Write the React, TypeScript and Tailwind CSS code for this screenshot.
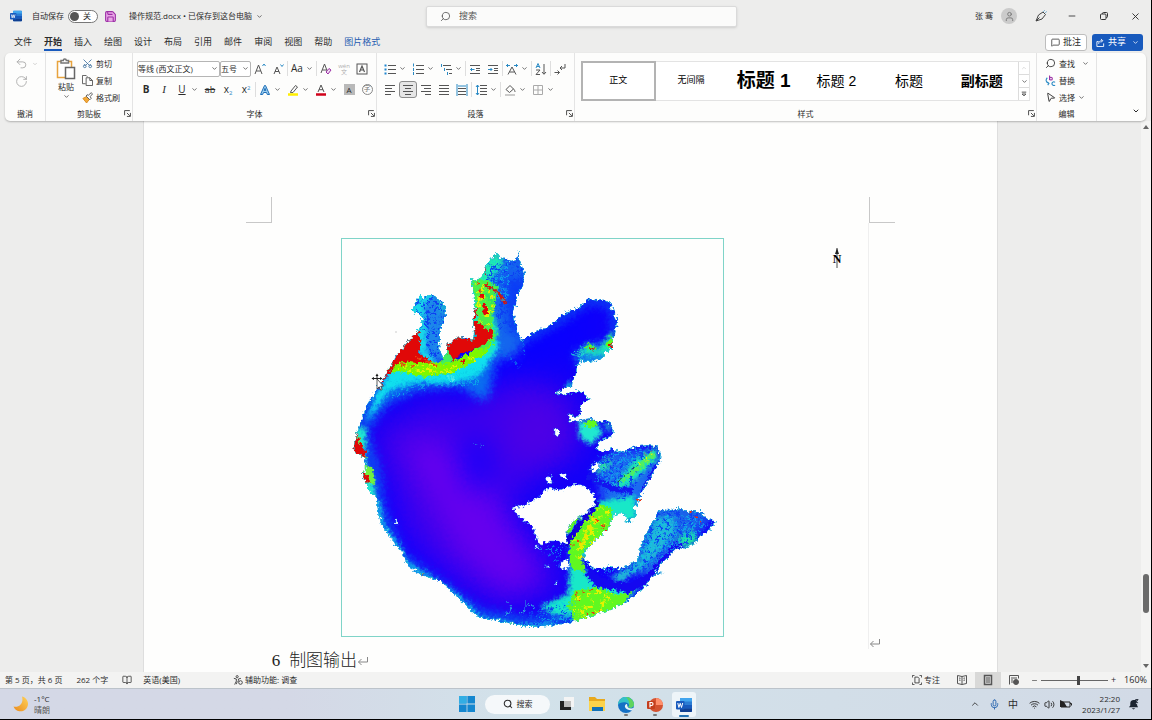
import React, { useState } from 'react';
import {
  Search,
  Scissors,
  Undo2,
  RotateCw,
  Save,
  ChevronDown,
  ChevronUp,
  Minus,
  X,
  MessageSquare,
  Share,
  User,
  BookOpen,
  Mic,
  Wifi,
  Volume2,
  MousePointer2,
} from 'lucide-react';

const tabs = ['文件', '开始', '插入', '绘图', '设计', '布局', '引用', '邮件', '审阅', '视图', '帮助', '图片格式'];

const styleItems = [
  { name: '正文', className: 'text-[9px]' },
  { name: '无间隔', className: 'text-[9px]' },
  { name: '标题 1', className: 'text-[19px] font-bold' },
  { name: '标题 2', className: 'text-[14px]' },
  { name: '标题', className: 'text-[14px]' },
  { name: '副标题', className: 'text-[14px] font-bold' },
];

const Chev = () => <ChevronDown className="size-[7px] shrink-0 text-[#444]" strokeWidth={2.5} />;

const Sep = () => <span className="h-[15px] w-px shrink-0 bg-[#dedede]" />;

type ToolProps = { label: string; menu?: boolean; active?: boolean; children: React.ReactNode };

const Tool = ({ label, menu, active, children }: ToolProps) => (
  <button
    type="button"
    aria-label={label}
    className={`flex h-[17px] shrink-0 items-center ${menu ? 'w-7' : 'w-[18px]'}`}
  >
    <span
      className={`flex h-[17px] w-[18px] shrink-0 items-center justify-center ${
        active ? 'rounded-[3px] border border-[#8c8c8c] bg-[#e6e6e6]' : ''
      }`}
    >
      {children}
    </span>
    {menu && <Chev />}
  </button>
);

const Launcher = () => (
  <button type="button" aria-label="更多选项" className="text-[#444]">
    <svg viewBox="0 0 12 12" className="size-[7px]" fill="none" stroke="currentColor" strokeWidth="1.6">
      <path d="M1 9V1h9M5 5l5 5M11 5v6H5" />
    </svg>
  </button>
);

type GroupProps = { title: string; className: string; launcher?: boolean; children: React.ReactNode };

const Group = ({ title, className, launcher, children }: GroupProps) => (
  <section aria-label={title} className={`flex flex-col justify-between border-r border-[#e4e4e4] ${className}`}>
    {children}
    <div className="mb-px grid h-[13px] shrink-0 grid-cols-[1fr_auto_1fr] items-center">
      <span />
      <span>{title}</span>
      <span className="flex justify-end pr-px">{launcher && <Launcher />}</span>
    </div>
  </section>
);

// horizontal rules given as [x1, x2, y]
const Lines = ({ rows, color = '#555' }: { rows: number[][]; color?: string }) => (
  <g stroke={color} strokeWidth="1">
    {rows.map(([a, b, y]) => (
      <path key={`${a}-${y}`} d={`M${a} ${y}H${b}`} />
    ))}
  </g>
);

const Icon = ({ children }: { children: React.ReactNode }) => (
  <svg viewBox="0 0 12 12" className="size-3" fill="none" stroke="#555" strokeWidth="1">
    {children}
  </svg>
);

const WordLogo = ({ className }: { className: string }) => (
  <svg viewBox="0 0 16 16" className={className}>
    <rect x="4" y="1" width="12" height="14" rx="1" fill="#2b7cd3" />
    <path d="M4 2a1 1 0 0 1 1-1h10a1 1 0 0 1 1 1v2.5H4z" fill="#41a5ee" />
    <path d="M4 8h12v3.5H4z" fill="#185abd" />
    <path d="M4 11.500h12V14a1 1 0 0 1-1 1H5a1 1 0 0 1-1-1z" fill="#103f91" />
    <rect x="0" y="4" width="8.500" height="8.500" rx="1" fill="#185abd" />
    <path d="M1.800 6l1.100 4.500L4.200 6.300l1.300 4.200L6.700 6" fill="none" stroke="#fff" strokeWidth="1" />
  </svg>
);

const TitleBar = () => {
  const [autoSave, setAutoSave] = useState(false);
  return (
    <header className="grid h-8 shrink-0 grid-cols-[1fr_27%_36%] items-center text-[8px]">
      <div className="flex items-center pl-[10px]">
        <WordLogo className="mr-[10px] size-3" />
        <span id="autosave" className="mr-1">自动保存</span>
        <button
          type="button"
          role="switch"
          aria-checked={autoSave}
          aria-labelledby="autosave"
          onClick={() => setAutoSave(!autoSave)}
          className="mr-[6px] flex h-[13px] w-[30px] items-center gap-1 rounded-full border border-[#777] bg-white px-px"
        >
          <span className="size-[9px] rounded-full bg-[#555]" />
          {autoSave ? '开' : '关'}
        </button>
        <button type="button" aria-label="保存" className="mr-3">
          <Save className="size-[13px] fill-[#e9a6e6] text-[#9b2fa5]" strokeWidth={2} />
        </button>
        <button type="button" className="flex items-center gap-1">
          操作规范.docx • 已保存到这台电脑 <Chev />
        </button>
      </div>
      <label className="flex h-[21px] items-center gap-2 rounded-[2px] border border-[#dadada] bg-[#fbfbfa] px-[13px] shadow-sm">
        <Search className="size-[11px] shrink-0 -scale-x-100 text-[#555]" strokeWidth={1.8} />
        <input
          type="text"
          aria-label="搜索"
          placeholder="搜索"
          className="w-full bg-transparent text-[9px] outline-none placeholder:text-[#555]"
        />
      </label>
      <div className="flex items-center justify-end pr-[10px]">
        <span>张 骞</span>
        <button type="button" aria-label="帐户" className="ml-2 flex size-4 items-center justify-center rounded-full bg-[#cbcbcb]">
          <User className="size-[11px] text-[#777]" strokeWidth={2} />
        </button>
        <button type="button" aria-label="墨迹" className="ml-[18px]">
          <svg viewBox="0 0 12 12" className="size-3" fill="none" stroke="#444" strokeWidth="1">
            <path d="M1 11L3.500 5 8 2l2.500 2.500L7 9zM1 11l3.500-3.500" />
            <path d="M8.500 1.500l1-1M10.500 2.500l1-.8" stroke="#2a8ac4" />
          </svg>
        </button>
        <button type="button" aria-label="最小化" className="ml-5"><Minus className="size-[10px]" strokeWidth={2} /></button>
        <button type="button" aria-label="还原" className="ml-[22px]">
          <svg viewBox="0 0 10 10" className="size-[10px]" fill="none" stroke="#333" strokeWidth="1">
            <rect x="1.500" y="3" width="5.500" height="5.500" rx="1" />
            <path d="M3.500 3V2.500a1 1 0 0 1 1-1H7.500a1 1 0 0 1 1 1v3a1 1 0 0 1-1 1H7" />
          </svg>
        </button>
        <button type="button" aria-label="关闭" className="ml-[21px]"><X className="size-[11px]" strokeWidth={2} /></button>
      </div>
    </header>
  );
};

const TabRow = () => (
  <nav className="flex h-[21px] shrink-0 items-center justify-between pl-[14px] pr-2">
    <div className="flex gap-3 pt-px text-[9px]">
      {tabs.map((tab) => (
        <button
          key={tab}
          type="button"
          className={
            tab === '开始'
              ? 'border-b-2 border-[#185abd] font-bold leading-[14px]'
              : tab === '图片格式'
                ? 'border-b-2 border-transparent leading-[14px] text-[#1f5cb0]'
                : 'border-b-2 border-transparent leading-[14px]'
          }
        >
          {tab}
        </button>
      ))}
    </div>
    <div className="flex gap-[5px] pb-px text-[9px]">
      <button type="button" className="flex h-[17px] items-center gap-[3px] rounded-[3px] border border-[#bdbdbd] bg-white px-[5px]">
        <MessageSquare className="size-[9px]" strokeWidth={2} /> 批注
      </button>
      <button type="button" className="flex h-[17px] items-center gap-[3px] rounded-[3px] bg-[#185abd] px-1 text-white">
        <svg viewBox="0 0 10 10" className="size-[9px]" fill="none" stroke="currentColor">
          <path d="M3 4H1v5.500h7.500V6M3 6.500C3 4 4.500 3 7 3M5.500 1L7.500 3l-2 2" />
        </svg>
        共享
        <ChevronDown className="ml-[3px] size-[7px]" strokeWidth={2.5} />
      </button>
    </div>
  </nav>
);

const FontGroup = () => (
  <Group title="字体" launcher className="w-[244px] shrink-0">
    <div className="pl-1 pt-[5px]">
      <div className="flex h-[21px] items-center">
        <div className="flex h-4 w-[83px] items-center rounded-[2px] border border-[#b5b5b5] bg-white pr-px">
          <select aria-label="字体" className="min-w-0 flex-1 appearance-none">
            <option>等线 (西文正文)</option>
          </select>
          <Chev />
        </div>
        <div className="flex h-4 w-[31px] items-center rounded-[2px] border border-[#b5b5b5] bg-white pr-px">
          <select aria-label="字号" className="min-w-0 flex-1 appearance-none">
            <option>五号</option>
          </select>
          <Chev />
        </div>
        <Tool label="增大字号"><Icon><path d="M1 11L4.500 2 8 11M2.300 8h4.400" /><path d="M8.500 3L10 1l1.500 2" stroke="#2a8ac4" /></Icon></Tool>
        <Tool label="减小字号"><Icon><path d="M2 11L5 4l3 7M3 8.500h4" /><path d="M8.500 1.500L10 3.500l1.500-2" stroke="#2a8ac4" /></Icon></Tool>
        <Sep />
        <Tool label="更改大小写" menu><span className="text-[10px]">Aa</span></Tool>
        <Sep />
        <Tool label="清除格式"><Icon><path d="M1 10L4.500 1 8 10M2.300 7h4.400" /><path d="M6 9l3-3.500 2 1.500-3 4z" fill="#f0dcf2" stroke="#9b2fa5" /></Icon></Tool>
        <Tool label="拼音指南">
          <span className="flex flex-col items-center text-[6px] leading-[6px] text-[#b0b0b0]"><span>wén</span><span>文</span></span>
        </Tool>
        <Tool label="字符边框"><Icon><rect x="1" y="1" width="10" height="10" /><path d="M3.500 9L6 3l2.500 6M4.300 7h3.400" strokeWidth="1.2" /></Icon></Tool>
      </div>
      <div className="flex h-[21px] items-center">
        <Tool label="加粗"><span className="text-[10px] font-bold">B</span></Tool>
        <Tool label="倾斜"><span className="font-['Liberation_Serif',serif] text-[11px] italic">I</span></Tool>
        <Tool label="下划线" menu><span className="text-[10px] underline">U</span></Tool>
        <Tool label="删除线"><span className="text-[9px] line-through">ab</span></Tool>
        <Tool label="下标"><span className="text-[10px]">x<sub className="text-[6px] text-[#2a8ac4]">2</sub></span></Tool>
        <Tool label="上标"><span className="text-[10px]">x<sup className="text-[6px] text-[#2a8ac4]">2</sup></span></Tool>
        <Sep />
        <Tool label="文本效果" menu><Icon><path d="M1.500 10.500L5.500 1.500h1l4 9H8.300L7.500 8.500h-3l-.8 2zM5.200 6.500h1.600L6 4.300z" fill="#9fd0f0" stroke="#1f6fb8" /></Icon></Tool>
        <Tool label="突出显示" menu><Icon><path d="M4 7l4.500-5.500L10.500 3 6 8.500 3.500 8.700z" /><path d="M1 10.500h10" stroke="#ffee00" strokeWidth="2.500" /></Icon></Tool>
        <Tool label="字体颜色" menu><Icon><path d="M3 8L6 1l3 7M4 5.700h4" /><path d="M1 10.500h10" stroke="#d0021b" strokeWidth="2.500" /></Icon></Tool>
        <Tool label="字符底纹"><span className="flex size-[11px] items-center justify-center bg-[#b9b9b9] text-[8px]">A</span></Tool>
        <Tool label="带圈字符"><span className="flex size-[11px] items-center justify-center rounded-full border border-[#888] text-[7px] text-[#777]">字</span></Tool>
      </div>
    </div>
  </Group>
);

const ParagraphGroup = () => (
  <Group title="段落" launcher className="w-[198px] shrink-0">
    <div className="pl-1 pt-[5px]">
      <div className="flex h-[21px] items-center">
        <Tool label="项目符号" menu>
          <Icon><Lines rows={[[4, 12, 2.5], [4, 12, 6.5], [4, 12, 10.5]]} /><path d="M.5 2.500h2M.5 6.500h2M.5 10.500h2" stroke="#1f86d0" strokeWidth="2" /></Icon>
        </Tool>
        <Tool label="编号" menu>
          <Icon><Lines rows={[[4, 12, 2.5], [4, 12, 6.5], [4, 12, 10.5]]} /><path d="M1.500.5v3M1.500 5v3M1.500 9v3" stroke="#2a8ac4" /></Icon>
        </Tool>
        <Tool label="多级列表" menu>
          <Icon><Lines rows={[[3, 11, 2.5], [6, 12, 6.5], [9, 12, 10.5]]} /><path d="M1.500 1v3M4.500 5v3M7.500 9v3" stroke="#2a8ac4" /></Icon>
        </Tool>
        <Sep />
        <Tool label="减少缩进量"><Icon><Lines rows={[[1, 11, 2.5], [7, 11, 5.5], [7, 11, 7.5], [1, 11, 10.5]]} /><path d="M5.500 6.500h-4M3 5L1.500 6.500 3 8" stroke="#2a8ac4" /></Icon></Tool>
        <Tool label="增加缩进量"><Icon><Lines rows={[[1, 11, 2.5], [7, 11, 5.5], [7, 11, 7.5], [1, 11, 10.5]]} /><path d="M1 6.500h4M3.500 5L5 6.500 3.500 8" stroke="#2a8ac4" /></Icon></Tool>
        <Sep />
        <Tool label="中文版式" menu><Icon><path d="M2 11.500L6 4l4 7.500M3.500 9h5" /><path d="M0 2.500h4M2 1L.5 2.500 2 4M12 2.500H8M10 1l1.500 1.500L10 4" stroke="#2a8ac4" /></Icon></Tool>
        <Sep />
        <Tool label="排序"><Icon><path d="M1 5L3 .5 5 5M1.800 3.500h2.400" stroke="#2a8ac4" /><path d="M1 7h4l-4 4.500h4M9 1v10M7 9l2 2.300L11 9" /></Icon></Tool>
        <Sep />
        <Tool label="显示编辑标记"><Icon><path d="M11 1v4H6M8 3L6 5l2 2M.5 9.500h5M3.500 7.500l2 2-2 2" /></Icon></Tool>
      </div>
      <div className="flex h-[21px] items-center">
        <Tool label="左对齐"><Icon><Lines rows={[[1, 11, 1.5], [1, 8, 4.5], [1, 11, 7.5], [1, 7, 10.5]]} /></Icon></Tool>
        <Tool label="居中" active><Icon><Lines rows={[[1, 11, 1.5], [3, 9, 4.5], [1, 11, 7.5], [3, 9, 10.5]]} /></Icon></Tool>
        <Tool label="右对齐"><Icon><Lines rows={[[1, 11, 1.5], [4, 11, 4.5], [1, 11, 7.5], [5, 11, 10.5]]} /></Icon></Tool>
        <Tool label="两端对齐"><Icon><Lines rows={[[1, 11, 1.5], [1, 11, 4.5], [1, 11, 7.5], [1, 11, 10.5]]} /></Icon></Tool>
        <Tool label="分散对齐"><Icon><Lines rows={[[2, 10, 4.5], [2, 10, 7.5], [2, 10, 10.5]]} /><path d="M1 0v12M11 0v12M2 2h8" stroke="#2a8ac4" /></Icon></Tool>
        <Sep />
        <Tool label="行距" menu><Icon><Lines rows={[[5, 12, 1.5], [5, 12, 4.5], [5, 12, 7.5], [5, 12, 10.5]]} /><path d="M2.500 1v10M1 3l1.500-2L4 3M1 9l1.500 2L4 9" stroke="#2a8ac4" /></Icon></Tool>
        <Sep />
        <Tool label="底纹" menu><Icon><path d="M2 5.500L6 1.500l3.500 3.500-4 3.500zM9.500 5c1 1 1.500 2 1.500 3" /><path d="M1 11h10" stroke="#bbb" strokeWidth="1.500" /></Icon></Tool>
        <Tool label="边框" menu><Icon><path d="M1.500 1.500h9v9h-9zM6 1.500v9M1.500 6h9" stroke="#aaa" /></Icon></Tool>
      </div>
    </div>
  </Group>
);

const Ribbon = () => {
  const [selected, setSelected] = useState('正文');
  return (
    <div className="relative z-10 ml-[5px] mr-[5px] flex h-[68px] shrink-0 rounded-[5px] bg-[#fdfdfc] text-[8px] shadow-[0_1px_2px_rgba(0,0,0,0.25)]">
      <Group title="撤消" className="w-[41px] shrink-0">
        <div className="flex flex-col gap-[5px] pl-[10px] pt-1 text-[#a8a8a8]">
          <button type="button" aria-label="撤消" className="flex items-center gap-1">
            <Undo2 className="size-[13px]" strokeWidth={1.6} />
            <ChevronDown className="size-[6px]" />
          </button>
          <button type="button" aria-label="恢复"><RotateCw className="size-[13px]" strokeWidth={1.6} /></button>
        </div>
      </Group>
      <Group title="剪贴板" launcher className="w-[87px] shrink-0">
        <div className="flex gap-1 pl-2">
          <button type="button" className="flex w-6 flex-col items-center gap-px pt-[5px] leading-[11px]">
            <svg viewBox="0 0 20 22" className="h-[22px] w-5" fill="#fff" strokeWidth="1.500">
              <path d="M1.500 3.500h14v16h-14z" stroke="#e8a33d" />
              <path d="M5 5V2.500h2.300a1.500 1.500 0 0 1 3 0h2.200V5z" stroke="#777" />
              <path d="M9.500 9.500h9v11h-9z" stroke="#666" />
            </svg>
            粘贴
            <Chev />
          </button>
          <div className="flex flex-col pt-[2px]">
            <button type="button" className="flex h-[17px] items-center gap-[3px]">
              <Scissors className="size-[11px] -rotate-90 text-[#3d6f9e]" strokeWidth={1.8} /> 剪切
            </button>
            <button type="button" className="flex h-[17px] items-center gap-[3px]">
              <svg viewBox="0 0 12 12" className="size-[11px]" fill="none" stroke="#555">
                <path d="M4 9.500H.5v-9h4L6 2" />
                <path d="M4.500 3h4l3 3v5.500h-7zM8.500 3v3h3" />
              </svg>
              复制
            </button>
            <button type="button" className="flex h-[17px] items-center gap-[3px]">
              <svg viewBox="0 0 12 12" className="size-[11px]" fill="none" stroke="#555">
                <path d="M1 7l4-2 3 3-3 4z" fill="#f2a93b" stroke="#d98a1c" />
                <path d="M4.500 4.500l4 4 1.500-1.500L9 5l2.500-3L10 .8 7 3.500 5.500 3z" fill="#fff" />
              </svg>
              格式刷
            </button>
          </div>
        </div>
      </Group>
      <FontGroup />
      <ParagraphGroup />
      <Group title="样式" launcher className="min-w-0 flex-1">
        <div className="mx-[6px] mt-2 flex h-10 border border-[#e3e3e3] bg-white">
          {styleItems.map((s) => (
            <button
              key={s.name}
              type="button"
              onClick={() => setSelected(s.name)}
              className={`min-w-0 flex-1 whitespace-nowrap font-['Liberation_Sans','Noto_Sans_CJK_SC',sans-serif] text-black ${s.className} ${
                selected === s.name ? 'outline-2 -outline-offset-1 outline-[#b3b3b3]' : ''
              }`}
            >
              {s.name}
            </button>
          ))}
          <div className="flex w-[11px] shrink-0 flex-col divide-y divide-[#dcdcdc] border-l border-[#dcdcdc]">
            <button type="button" aria-label="上一行" className="flex flex-1 items-center justify-center"><ChevronUp className="size-[6px] text-[#bbb]" /></button>
            <button type="button" aria-label="下一行" className="flex flex-1 items-center justify-center"><Chev /></button>
            <button type="button" aria-label="其他" className="flex flex-1 items-center justify-center">
              <svg viewBox="0 0 8 8" className="size-[6px]" fill="none" stroke="#444" strokeWidth="1.200"><path d="M1 1.500h6M1.500 4L4 6.500 6.500 4z" /></svg>
            </button>
          </div>
        </div>
      </Group>
      <Group title="编辑" className="w-[60px] shrink-0">
        <div className="flex flex-col items-start pl-2 pt-[2px]">
          <button type="button" className="flex h-[17px] items-center gap-[3px]">
            <Search className="size-[11px] -scale-x-100" strokeWidth={1.8} /> 查找
            <span className="pl-1"><Chev /></span>
          </button>
          <button type="button" className="flex h-[17px] items-center gap-[3px]">
            <svg viewBox="0 0 12 12" className="size-[11px]" fill="none" strokeWidth="1.200">
              <path d="M5 .5v5M5 4a1.500 1.500 0 1 1 3 0 1.500 1.500 0 0 1-3 0" stroke="#9b2fa5" />
              <path d="M2.500 3C.5 5 .8 8 4 9M2.500 7.500L4.300 9 3 11M11 8a2 2 0 1 0 0 3" stroke="#2a8ac4" />
            </svg>
            替换
          </button>
          <button type="button" className="flex h-[17px] items-center gap-[3px]">
            <MousePointer2 className="size-[11px] rotate-12" strokeWidth={1.8} /> 选择 <Chev />
          </button>
        </div>
      </Group>
      <div className="flex w-[49px] shrink-0 items-end justify-end p-[6px]">
        <button type="button" aria-label="折叠功能区"><ChevronDown className="size-[8px]" strokeWidth={3} /></button>
      </div>
    </div>
  );
};

const COAST =
  'M497 252L501 258 506 257 511 260 516 258 519 250 519 258 522 265 525 275 523 285 518 292 516 303 513 312 517 325 519 334 522 339 527 336 532 332 540 328 547 327 555 320 563 314 573 308 580 306 584 301 589 298 596 299 602 298 610 302 615 312 617 322 615 332 613 338 613 348 604 351 603 357 597 359 590 361 583 360 578 354 572 354 573 351 579 350 583 352 580 360 577 368 576 374 573 378 572 385 565 387 556 392 563 394 572 391 580 390 585 392 587 397 591 398 583 402 580 408 581 415 575 416 569 413 570 421 578 420 585 418 592 417 597 421 608 419 613 428 612 434 605 438 598 443 597 449 604 451 612 448 620 451 627 449 633 446 640 445 647 444 657 445 661 453 659 463 653 472 648 480 640 494 639 502 633 507 637 512 633 518 627 522 625 513 617 512 612 518 608 527 600 535 590 545 584 553 587 562 597 569 604 567 610 565 620 568 630 563 637 560 640 547 647 530 653 520 657 514 660 508 668 510 677 507 690 510 702 510 704 516 709 518 717 521 711 525 709 530 700 535 695 543 683 548 677 546 667 557 657 567 656 571 664 572 654 573 647 583 637 593 623 603 610 609 597 613 573 621 550 625 530 626 517 624 500 620 483 617 478 617 467 605 453 592 440 580 423 575 408 565 403 552 393 540 381 523 378 510 377 497 370 492 366 482 362 473 366 468 365 457 356 453 353 446 357 432 365 408 377 387 387 372 395 357 405 344 416 332 421 325 423 318 417 312 412 310 415 302 420 294 424 298 428 294 435 295 440 300 445 306 446 313 443 322 440 328 440 338 439 345 443 358 447 350 447 343 457 337 464 336 473 339 474 332 473 322 475 308 473 288 471 278 477 280 483 273 485 266 487 263 493 256Z';

const ISLANDS = [
  'M511 507L517 505 523 506 532 500 540 496 545 489 550 487 558 489 567 487 574 483 581 484 587 487 594 493 595 503 588 511 582 515 573 520 567 530 566 543 558 540 550 540 540 544 535 533 530 523 520 517 516 511Z',
  'M555 428l4 0 0 6-4 1z',
  'M546 478l5 -4 1 6-3 3z',
  'M560 475l5 -3 2 5-4 0z',
  'M590 468l5 -7 5 2 -1 5-6 3z',
  'M560 562l6 -4 4 4 -3 7-7 -2z',
  'M554 581l3 0 0 3z',
  'M395 519l2 0 0 5-2 -1z',
  'M545 565l6 0 -2 2z',
  'M536 545l2 0 0 2-2 0z',
];

const LakeMap = () => (
  <svg viewBox="342 238 381 397" className="block h-auto w-full" role="img" aria-label="湖泊水深图">
    <defs>
      <clipPath id="coast"><path d={COAST} /></clipPath>
      <filter id="rough" x="-5%" y="-5%" width="110%" height="110%" colorInterpolationFilters="sRGB">
        <feTurbulence type="fractalNoise" baseFrequency="0.3" numOctaves="3" seed="4" result="n" />
        <feDisplacementMap in="SourceGraphic" in2="n" scale="7" xChannelSelector="R" yChannelSelector="G" />
      </filter>
      <filter id="soft2" x="-30%" y="-30%" width="160%" height="160%" colorInterpolationFilters="sRGB"><feGaussianBlur stdDeviation="2" /></filter>
      <filter id="soft5" x="-40%" y="-40%" width="180%" height="180%" colorInterpolationFilters="sRGB"><feGaussianBlur stdDeviation="5" /></filter>
      <filter id="soft14" x="-60%" y="-60%" width="220%" height="220%" colorInterpolationFilters="sRGB"><feGaussianBlur stdDeviation="14" /></filter>
      <filter id="grain" x="0" y="0" width="100%" height="100%" colorInterpolationFilters="sRGB">
        <feTurbulence type="fractalNoise" baseFrequency="0.4" numOctaves="2" seed="9" />
        <feColorMatrix values="0 0 0 0 0.05  0 0 0 0 0.8  0 0 0 0 0.9  8 0 0 0 -4.200" result="g" />
        <feComposite in="g" in2="SourceGraphic" operator="in" />
      </filter>
      <filter id="grainBlue" x="0" y="0" width="100%" height="100%" colorInterpolationFilters="sRGB">
        <feTurbulence type="fractalNoise" baseFrequency="0.3" numOctaves="2" seed="21" />
        <feColorMatrix values="0 0 0 0 0.05  0 0 0 0 0.25  0 0 0 0 0.95  0 8 0 0 -4.200" result="g" />
        <feComposite in="g" in2="SourceGraphic" operator="in" />
      </filter>
      <filter id="grainWarm" x="0" y="0" width="100%" height="100%" colorInterpolationFilters="sRGB">
        <feTurbulence type="fractalNoise" baseFrequency="0.22" numOctaves="2" seed="2" />
        <feColorMatrix values="0 0 0 0 0.9  0 0 0 0 0.95  0 0 0 0 0  9 0 0 0 -5" result="g" />
        <feComposite in="g" in2="SourceGraphic" operator="in" />
      </filter>
    </defs>
    <g filter="url(#rough)">
      <g clipPath="url(#coast)">
        <path d={COAST} fill="#1200f8" />
        <g filter="url(#soft14)">
          <path d="M375 430L440 398 530 378 575 400 580 450 530 480 500 510 545 560 560 590 500 605 440 570 400 520Z" fill="#3e00ec" />
          <path d="M400 440L440 440 490 490 520 530 545 575 510 595 460 555Z" fill="#6600ee" />
          <path d="M520 400L560 390 575 450 540 470 500 440Z" fill="#4c00e6" />
          <path d="M490 350L560 320 610 300 580 350 530 365 470 400 440 410Z" fill="#0800ff" />
          <path d="M455 440l35 -5 5 50-30 5z" fill="#1c00f8" />
          <path d="M385 480L400 540 430 570 450 580" stroke="#1000ff" strokeWidth="16" fill="none" />
        </g>
        <g filter="url(#soft5)">
          <path d="M360 440L376 390 410 366 450 372 480 355 500 338 488 398 480 398 460 385 420 388 388 402 372 422Z" fill="#0a6cf0" />
          <path d="M480 255h50v50l-12 48-30 10z" fill="#1466ee" />
          <path d="M505 275l25 5 -6 55-16 -5z" fill="#0a3cf6" />
          <path d="M410 290h40v72h-22z" fill="#1c86ea" />
          <path d="M374 380L362 430 375 470 380 510 400 555 425 574 480 614 530 622 590 612" stroke="#0a58f0" strokeWidth="9" fill="none" />
          <path d="M520 340L560 318 590 298 614 305 616 335" stroke="#0a50f2" strokeWidth="7" fill="none" />
          <path d="M575 352l35 -12 6 20-35 6z" fill="#1496e8" />
          <path d="M615 450h50l-28 65-35 -15 -4 -35z" fill="#1c6cf0" />
          <path d="M655 500h70l-70 80-25 -12z" fill="#1a64ea" />
        </g>
        <g filter="url(#soft2)">
          <path d="M366 420L379 388 392 366 430 366 455 366 480 350 490 330 500 345 480 374 452 383 415 381 388 390 376 408Z" fill="#10e0ee" />
          <path d="M482 265L497 250 504 262 490 278 488 300 496 320 498 332 490 355 474 340 468 270Z" fill="#20ecb0" />
          <path d="M408 315L414 290 436 292 423 305 427 328 427 350 440 366 425 368 412 335Z" fill="#18d8e8" />
          <path d="M436 296l8 10 -2 8z" fill="#18d8c8" />
          <path d="M578 352L590 341 598 350 612 330 616 345 604 354z" fill="#20e8b0" />
          <path d="M578 420h17l8 12-12 12-12 -8z" fill="#20e8d0" />
          <path d="M604 422h6v12z" fill="#20c8d0" />
          <path d="M569 380l4 0 0 6-8 2z" fill="#10b0e0" />
          <path d="M614 486L632 462 655 446 658 456 640 474 622 488Z" fill="#20f0a8" />
          <path d="M590 470l22 -14 -5 14z" fill="#30e8a0" />
          <path d="M655 518L673 514 676 530 660 550 645 565 620 582 610 576 640 560Z" fill="#20b8d8" />
          <path d="M676 538l17 -9 5 10-10 8z" fill="#20e8a0" />
          <path d="M540 606L568 593 570 560 568 530 600 500 635 495 637 520 610 520 590 545 580 562 594 582 620 587 645 580 620 606 590 617 555 614Z" fill="#18e8c8" />
          <path d="M350 430L366 426 366 462 374 480 376 498 362 494 356 468Z" fill="#20e8d0" />
          <path d="M378 500L381 523 395 542 405 562 428 576 455 594 480 618 520 625 560 623" stroke="#14c8e8" strokeWidth="4" fill="none" />
        </g>
        <g filter="url(#grainBlue)">
          <path d="M482 262L526 262 518 335 500 330 492 300zM412 292h34v66h-16zM545 605h30v20h-60v-8zM583 575l30 8 25 -6 10 8-20 8-30 -4zM655 508L710 512 700 540 670 548 640 575 600 575 640 560zM597 455L655 448 655 460 625 500 600 490z" />
        </g>
        <g fill="#60f820">
          <path d="M386 372L394 360 425 360 450 362 478 347 492 332 493 342 484 354 468 364 450 373 425 376 400 371Z" fill="#7cf800" />
          <path d="M472 278L488 279 498 286 494 306 492 325 497 335 484 350 474 345 478 320Z" fill="#48f048" />
          <path d="M446 344l9 8 -2 8-12 5z" fill="#40f060" />
          <path d="M569 550L573 530 592 512 600 503 613 508 610 526 594 540 580 555 585 570 572 568Z" />
          <path d="M574 590L596 586 618 594 634 590 620 605 590 617 575 621 568 606Z" />
          <path d="M564 528l6 -12 12 -2 -14 18z" />
          <path d="M583 423l8 -5 6 4 -6 6z" />
          <path d="M584 347l6 -5 7 6zM604 344l8 -8 2 10z" />
          <path d="M618 483L651 451 656 455 630 477Z" fill="#50f060" />
          <path d="M363 462l10 6 2 16-10 -4zM357 432l5 14 5 10-4 3z" fill="#70f040" />
        </g>
        <g filter="url(#grainWarm)">
          <path d="M394 362L425 362 450 366 484 348 486 354 450 374 400 370zM474 280L496 286 490 340 480 345zM570 550L576 530 600 506 612 510 608 526 594 540 582 560zM572 592L596 586 618 596 600 612 575 619zM625 475L652 450 654 456z" />
        </g>
        <g fill="none" stroke="#e8e800" strokeWidth="2" strokeDasharray="5 4">
          <path d="M580 545L592 524 600 516" strokeWidth="5" />
          <path d="M484 619L515 624M420 574L442 583" />
        </g>
        <g fill="#e00808">
          <path d="M378 388L392 362 417 326 421 342 419 352 426 356 432 362 418 362 410 361 402 360 396 364Z" />
          <path d="M446 342L458 334 466 338 476 338 473 322 476 320 482 325 488 329 494 328 491 338 482 345 470 350 460 353 453 361 449 352Z" />
          <path d="M350 448L357 430 359 441 366 450 365 459Z" />
          <path d="M360 470l6 3 4 7-5 3z" />
          <path d="M470 275h6v4zM483 266h3v10zM482 303l5 0 0 11-4 -2zM473 308l4 0 0 8-4 0zM480 292l3 0 0 5-3 0z" />
          <path d="M590 346l4 1 1 3-4 -1zM610 342l4 0 0 4-4 1zM461 360l4 -2 -1 6z" />
        </g>
        <path d="M416 356L440 366M400 363L416 366" stroke="#e84810" strokeWidth="2" fill="none" strokeDasharray="6 3" />
        <path d="M486 284L498 291 506 303" stroke="#d01810" strokeWidth="3" fill="none" />
        <path d="M486 292L494 304" stroke="#30e060" strokeWidth="3" fill="none" />
        <g fill="none" stroke="#f03010" strokeWidth="2" strokeDasharray="2 5">
          <path d="M478 282L482 302M645 455L654 448M592 514L606 530M576 594L592 588M578 600L584 598M586 614L600 610M690 511L704 524M423 573L428 577M572 545L580 540" />
        </g>
        <path d="M567 545L570 536 592 508 597 500" stroke="#1200d8" strokeWidth="5" fill="none" />
        <path d="M588 570L600 582 628 587 650 577 664 560 680 543" stroke="#1408f0" strokeWidth="9" fill="none" />
        <path d="M588 475L612 487 632 490M642 492L658 464" stroke="#1414f0" strokeWidth="6" fill="none" />
        <path d="M617 482L638 463" stroke="#205030" strokeWidth="1" fill="none" />
        <g filter="url(#grain)" opacity="0.6">
          <path d="M655 515L690 515 712 522 640 572 600 572zM600 455L650 445 655 460 625 490 595 480zM480 260L510 260 508 300 495 300zM388 380L480 366 480 385 440 384 385 398zM545 600h30v20h-40zM578 345h25v16h-25zM375 500L400 560 380 530zM535 545l28 0 -4 20z" />
        </g>
        <path d="M506 600l4 3 1 8-5 3M519 612l6 -2 0 -12M528 604l8 2M474 443l8 2" stroke="#28a8e0" strokeWidth="1" fill="none" />
        <path d="M448 376l4 -2 2 4-3 3z" fill="none" stroke="#50e8e8" />
        <path d="M520 328L524 352M498 348L520 366" stroke="#0a60f0" strokeWidth="2" fill="none" strokeDasharray="4 3" />
        <path d={COAST} fill="none" stroke="#20d8d0" strokeWidth="1" />
      </g>
      {ISLANDS.map((d) => (
        <path key={d} d={d} fill="#fefefd" stroke="#2090f0" strokeWidth=".5" />
      ))}
      <path d="M637 499h3M605 529h2" stroke="#f03010" strokeWidth="2" />
    </g>
    <path d="M395 331h2" stroke="#ccc" />
  </svg>
);

const ReturnMark = () => (
  <svg viewBox="0 0 12 12" className="size-3 shrink-0" fill="none" stroke="#888" strokeWidth="1">
    <path d="M10.500 2v5h-9M4.500 4L1.500 7l3 3" />
  </svg>
);

const Document = () => (
  <main className="flex min-h-0 flex-1 bg-[#ededec]">
    <div className="flex min-w-0 flex-1 justify-center overflow-hidden">
      <article className="h-max min-h-full w-3/4 border-x border-[#dedede] bg-[#fefefd]">
        <div className="flex justify-between px-[102px] pt-[76px]">
          <span className="size-[26px] border-b border-r border-[#c8c8c8]" />
          <span className="size-[26px] border-b border-l border-[#c8c8c8]" />
        </div>
        <div className="flex pl-[128px]">
          <div className="flex flex-1 border-r border-[#efefef] pl-[69px]">
            <figure className="relative mt-[15px] w-[383px] shrink-0 self-start border border-[#7fd4c8]">
              <LakeMap />
              <svg viewBox="0 0 14 18" className="absolute left-[29px] top-[134px] h-[18px] w-[14px]">
                <path d="M6 .5L7.500 3h-3zM.5 5.500L3 4v3zM11.500 5.500L9 4v3z" fill="#111" />
                <path d="M6 2v4M2 5.500h8" stroke="#222" fill="none" />
                <path d="M6 6v10l2.200 -2.200 1.500 3.400 1.500 -.7-1.500 -3.300h2.800z" fill="#fff" stroke="#333" strokeWidth=".8" />
              </svg>
            </figure>
            <div className="flex flex-1 justify-end pr-[25px] pt-6">
              <svg viewBox="0 0 12 22" className="h-[22px] w-3" aria-label="N">
                <path d="M6 1v20" stroke="#222" strokeWidth=".8" />
                <path d="M6 1l2 6H4z" fill="#222" />
                <text x="6" y="16" textAnchor="middle" className="font-['Liberation_Serif',serif] text-[12px] font-bold">N</text>
              </svg>
            </div>
          </div>
          <div className="flex w-[128px] shrink-0 items-end pt-[414px]"><ReturnMark /></div>
        </div>
        <h1 className="flex items-center pl-[128px] font-['Liberation_Serif','Noto_Sans_CJK_SC',serif] text-[17px] font-light leading-6 text-[#222]">
          <span className="mr-[9px]">6</span>制图输出<ReturnMark />
        </h1>
      </article>
    </div>
    <div className="flex w-[10px] shrink-0 flex-col items-center bg-[#f4f4f3] py-[3px]">
      <svg viewBox="0 0 6 6" className="size-[6px]"><path d="M3 1l3 4H0z" fill="#666" /></svg>
      <span className="grow-[443]" />
      <span className="h-[39px] w-[6px] rounded-full bg-[#6b6b6b]" />
      <span className="grow-[50]" />
      <svg viewBox="0 0 6 6" className="size-[6px]"><path d="M3 5L0 1h6z" fill="#666" /></svg>
    </div>
  </main>
);

const StatusBar = () => {
  const [zoom, setZoom] = useState(57);
  return (
    <div className="flex h-4 shrink-0 items-center justify-between bg-[#f3f3f2] pl-[5px] pr-1 text-[8px]">
      <div className="flex items-center">
        <span>第 5 页，共 6 页</span>
        <span className="ml-[14px]">262 个字</span>
        <button type="button" aria-label="校对" className="ml-[14px]"><BookOpen className="size-[10px]" strokeWidth={1.8} /></button>
        <span className="ml-[11px]">英语(美国)</span>
        <button type="button" className="ml-[53px] flex items-center gap-[2px]">
          <svg viewBox="0 0 12 12" className="size-[10px]" fill="none" stroke="#333" strokeWidth="1">
            <circle cx="5" cy="2" r="1.300" />
            <path d="M1 4l3 .8v2.500L2 11.500M9.500 4L6.500 4.800v2L7 8M5.200 7.500L4 11" />
            <circle cx="9" cy="9" r="2.200" />
          </svg>
          辅助功能: 调查
        </button>
      </div>
      <div className="flex h-full items-center">
        <button type="button" className="mr-[9px] flex items-center gap-[2px]">
          <svg viewBox="0 0 12 12" className="size-[10px]" fill="none" stroke="#333"><path d="M.5 3V.5H3M9 .5h2.500V3M.5 9v2.500H3M9 11.500h2.500V9M3.500 2.500H7L8.500 4v5.500h-5z" /></svg>
          专注
        </button>
        <button type="button" aria-label="阅读视图" className="flex w-[26px] justify-center">
          <Icon><path d="M6 2.500L1.500 1.500v8L6 10.500l4.500 -1v-8zM6 2.500v8M3 4l1.500.3M3 6l1.500.3M9 4l-1.500.3M9 6l-1.500.3" /></Icon>
        </button>
        <button type="button" aria-label="页面视图" className="flex h-full w-[26px] items-center justify-center bg-[#d9d9d8]">
          <Icon><path d="M2.500 1.500h7v9h-7z" strokeWidth="1.500" /><path d="M4 4h4M4 6h4M4 8h4" /></Icon>
        </button>
        <button type="button" aria-label="Web 版式视图" className="flex w-[27px] justify-center">
          <Icon><path d="M1.500 10.500v-9h9v3M3 4h6M3 6h2M3 8h2" /><circle cx="8" cy="8" r="2.500" fill="#555" /></Icon>
        </button>
        <button type="button" aria-label="缩小" className="mx-[3px]"><Minus className="size-[7px]" /></button>
        <input
          type="range"
          aria-label="缩放"
          value={zoom}
          onChange={(e) => setZoom(Number(e.target.value))}
          className="h-3 w-[67px] appearance-none bg-transparent [&::-webkit-slider-runnable-track]:h-px [&::-webkit-slider-runnable-track]:bg-[#666] [&::-webkit-slider-thumb]:-mt-1 [&::-webkit-slider-thumb]:h-[9px] [&::-webkit-slider-thumb]:w-[3px] [&::-webkit-slider-thumb]:appearance-none [&::-webkit-slider-thumb]:bg-[#444]"
        />
        <button type="button" aria-label="放大" className="ml-[3px] mr-2 text-[9px]">+</button>
        <span className="text-[9px]">160%</span>
      </div>
    </div>
  );
};

const Taskbar = () => (
  <footer className="grid h-[31px] shrink-0 grid-cols-[1fr_auto_1fr] items-center border-t border-[#bcc3ca] bg-linear-to-r from-[#d4d8e6] from-25% via-[#d2e2ea] via-45% to-[#d2dae6] text-[8px]">
    <div className="flex items-center gap-[5px] pl-[13px]">
      <svg viewBox="0 0 16 16" className="size-4">
        <defs><linearGradient id="moon" x1="1" y1="0" x2="0" y2="1"><stop offset="0" stopColor="#ffd35a" /><stop offset="1" stopColor="#ea8a1c" /></linearGradient></defs>
        <path d="M9 .5a7.500 7.500 0 1 1-8.500 10C6 12 11 7 9 .5z" fill="url(#moon)" />
      </svg>
      <span className="leading-[11px]">-1°C<br /><span className="text-[#555]">晴朗</span></span>
    </div>
    <div className="flex items-center pl-1">
      <button type="button" aria-label="开始菜单">
        <svg viewBox="0 0 16 16" className="size-4"><path d="M0 0h7.600v7.600H0zM8.400 0H16v7.600H8.400zM0 8.400h7.600V16H0zM8.400 8.400H16V16H8.400z" fill="#1587cf" /><path d="M0 0h7.600v7.600H0z" fill="#32aee4" /></svg>
      </button>
      <button type="button" className="ml-[10px] mr-[9px] flex h-[19px] w-[65px] items-center justify-center gap-1 rounded-full bg-[#f5f8fa]">
        <Search className="size-[10px]" strokeWidth={2.5} /> 搜索
      </button>
      <button type="button" aria-label="任务视图" className="mr-[13px]">
        <svg viewBox="0 0 16 16" className="size-4"><path d="M5 1h10v10H5z" fill="#f4f4f4" /><path d="M1 5h4v6h7v3H1z" fill="#222" /><path d="M5 5h7v6H5z" fill="#bdbdbd" /></svg>
      </button>
      <button type="button" aria-label="文件资源管理器" className="mr-3">
        <svg viewBox="0 0 18 16" className="h-4 w-[18px]"><path d="M1 1h6l2 2h8v12H1z" fill="#e8a91e" /><path d="M1 5h16v10H1z" fill="#fbd34b" /><path d="M4 15v-4h11v4z" fill="#1272b8" /></svg>
      </button>
      <button type="button" aria-label="Edge" className="mr-[13px] flex flex-col items-center gap-px pt-1">
        <svg viewBox="0 0 16 16" className="size-4">
          <circle cx="8" cy="8" r="8" fill="#1470c4" />
          <path d="M0 8a8 8 0 0 1 16 -.5c0 3-3 4-6 2.500 2-1 1-4-2-4.500C4 5 1 6 0 8z" fill="#35c0c8" />
          <path d="M8 0a8 8 0 0 1 8 7.500c0 3-3 4-6 2.500 2-1.200 2-6-2-10z" fill="#5fd45c" />
          <path d="M9 7c-3 0-4 6 5 6.500l2 -2.500c-3 1-6 .5-6.500 -1.500z" fill="#e8f4f8" />
        </svg>
        <span className="h-[2px] w-1 rounded-full bg-[#777]" />
      </button>
      <button type="button" aria-label="PowerPoint" className="mr-[9px] flex flex-col items-center gap-px pt-1">
        <svg viewBox="0 0 16 16" className="size-4">
          <circle cx="9" cy="8" r="7" fill="#d35230" /><path d="M9 1a7 7 0 0 1 7 7H9z" fill="#ff8f6b" />
          <rect x="0" y="4" width="8" height="8" rx="1" fill="#c43e1c" />
          <path d="M3 10.500V5.500h1.500a1.500 1.500 0 0 1 0 3H3" fill="none" stroke="#fff" strokeWidth="1.200" />
        </svg>
        <span className="h-[2px] w-1 rounded-full bg-[#777]" />
      </button>
      <button type="button" aria-label="Word" className="flex h-[25px] w-6 flex-col items-center justify-end gap-[2px] rounded-[3px] bg-[#eef5f9]">
        <WordLogo className="size-4" />
        <span className="h-[2px] w-[10px] rounded-full bg-[#2472b4]" />
      </button>
    </div>
    <div className="flex items-center justify-end pr-3">
      <button type="button" aria-label="显示隐藏的图标"><ChevronUp className="size-[10px]" strokeWidth={2} /></button>
      <Mic className="ml-[9px] size-[11px] text-[#2463ae]" strokeWidth={2} />
      <span className="ml-2 text-[10px]">中</span>
      <Wifi className="ml-[11px] size-[11px]" strokeWidth={2} />
      <Volume2 className="ml-1 size-[11px]" strokeWidth={2} />
      <svg viewBox="0 0 12 10" className="ml-[5px] h-[10px] w-3"><path d="M1 3h9v5H1zM10 4.500h1.500v2" fill="none" stroke="#222" /><path d="M0 1l4 2 3 5H0z" fill="#222" /></svg>
      <span className="ml-[10px] text-right leading-[11px]">22:20<br />2023/1/27</span>
      <svg viewBox="0 0 12 12" className="ml-2 size-[11px]"><path d="M1 9l1.500 -2V4.500a3.500 3.500 0 0 1 4 -3.500h3l-1 4 1.500 1v1l1 2zM4 10h4l-2 1.500z" fill="#1c2430" /><path d="M8 .5h3L8.500 4H11" fill="none" stroke="#1c2430" /></svg>
    </div>
  </footer>
);

const App: React.FC = () => (
  <div className="flex h-screen w-full flex-col overflow-hidden border-b border-r border-black bg-[#ededec] font-['Open_Sans','Noto_Sans_CJK_SC',sans-serif] text-[#2b2b2b]">
    <TitleBar />
    <TabRow />
    <Ribbon />
    <Document />
    <StatusBar />
    <Taskbar />
  </div>
);

export default App;
